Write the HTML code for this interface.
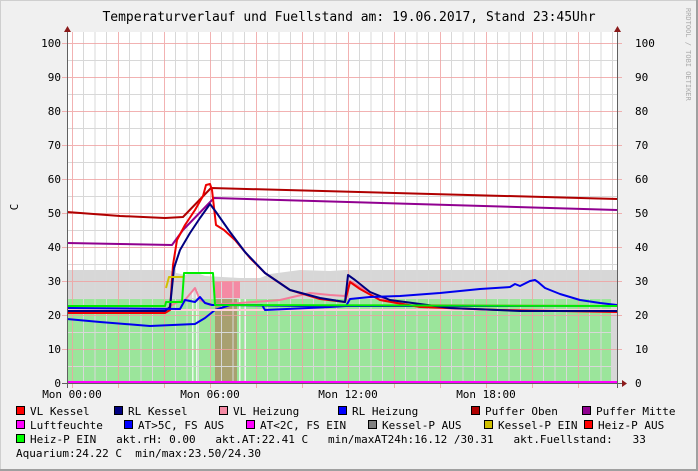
<!DOCTYPE html>
<html><head><meta charset="utf-8"><style>
html,body{margin:0;padding:0;background:#f0f0f0}
svg{display:block}
text{font-family:"DejaVu Sans Mono","Liberation Mono",monospace;font-size:11px;fill:#000}
</style></head><body>
<svg width="698" height="471" viewBox="0 0 698 471" xmlns="http://www.w3.org/2000/svg">
<rect x="0" y="0" width="698" height="471" fill="#f0f0f0"/>
<rect x="0.5" y="0.5" width="697" height="470" fill="none" stroke="#cfcfcf"/>
<rect x="696" y="0" width="2" height="471" fill="#a0a0a0"/>
<rect x="0" y="469" width="698" height="2" fill="#a0a0a0"/>
<text x="349" y="21" text-anchor="middle" style="font-size:13px">Temperaturverlauf und Fuellstand am: 19.06.2017, Stand 23:45Uhr</text>
<text transform="translate(686,8) rotate(90)" style="font-size:7px;fill:#aaa">RRDTOOL / TOBI OETIKER</text>
<rect x="67" y="32" width="550" height="351" fill="#fff"/>
<!-- areas -->
<path d="M67,270 L170,270 L172,272 L185,275 L195,272 L205,276 L240,278 L260,278 L270,274 L300,270 L330,271 L345,270 L617,270 L617,383 L67,383Z" fill="#d7d7d7"/>
<path d="M67,299 L611,299 L611,383 L67,383Z" fill="#9be59b"/>
<path d="M215,281 L240,281 L240,299 L215,299Z" fill="#f48aa4"/>
<path d="M215,299 L237,299 L237,383 L215,383Z" fill="#a8a070"/>
<g fill="#fff" opacity=".8"><rect x="192" y="290" width="1.5" height="93"/><rect x="196" y="290" width="1.5" height="93"/><rect x="239" y="299" width="1.5" height="84"/><rect x="245" y="299" width="1" height="84"/></g>
<!-- grid -->
<g stroke="#d8d8d8" stroke-width="1">
<path d="M67,366.5H617M67,332.5H617M67,298.5H617M67,264.5H617M67,230.5H617M67,196.5H617M67,162.5H617M67,128.5H617M67,94.5H617M67,60.5H617"/>
<path d="M83.5,32V383M95,32V383M106.5,32V383M129.5,32V383M141,32V383M152.5,32V383M175.5,32V383M187,32V383M198.5,32V383M221.5,32V383M233,32V383M244.5,32V383M267.5,32V383M279,32V383M290.5,32V383M313.5,32V383M325,32V383M336.5,32V383M359.5,32V383M371,32V383M382.5,32V383M405.5,32V383M417,32V383M428.5,32V383M451.5,32V383M463,32V383M474.5,32V383M497.5,32V383M509,32V383M520.5,32V383M543.5,32V383M555,32V383M566.5,32V383M589.5,32V383M601,32V383M612.5,32V383"/>
</g>
<g stroke="#f0a0a0" stroke-width="1" opacity=".8">
<path d="M62,383.5H622M62,349.5H622M62,315.5H622M62,281.5H622M62,247.5H622M62,213.5H622M62,179.5H622M62,145.5H622M62,111.5H622M62,77.5H622M62,43.5H622"/>
<path d="M72.5,32V388M118.5,32V388M164.5,32V388M210.5,32V388M256.5,32V388M302.5,32V388M348.5,32V388M394.5,32V388M440.5,32V388M486.5,32V388M532.5,32V388M578.5,32V388"/>
</g>
<!-- lines -->
<g fill="none" stroke-width="2" stroke-linejoin="round">
<polyline stroke="#0000ee" points="67,319 100,322 150,326 195,324 205,318 215,310 230,305 300,306 617,306"/>
<polyline stroke="#ffd0d8" points="67,310 617,310"/>
<polyline stroke="#f47c9a" points="67,311 166,311 170,306 178,302 185,300 195,288 200,300 210,305 240,303 280,300 310,293 330,295 345,296 350,281 360,287 380,297 400,305 617,306"/>
<polyline stroke="#b00000" points="67,212 120,216 165,218 183,217 211,188 617,199"/>
<polyline stroke="#900090" points="67,243 120,244 172,245 183,230 214,198 617,210"/>
<polyline stroke="#ee0000" points="67,313 165,313 170,310 173,265 177,240 185,225 195,210 203,196 206,185 210,184 212,190 216,225 224,230 235,240 250,258 265,273 290,290 320,299 345,302 350,282 360,289 380,300 420,307 500,310 617,312"/>
<polyline stroke="#000080" points="67,311 165,311 170,307 174,268 180,250 190,233 200,218 210,204 216,212 230,232 245,252 265,273 290,290 320,298 345,302 348,275 355,280 370,292 390,300 450,308 520,311 617,311"/>
<polyline stroke="#0000ee" points="67,308 180,309 185,300 195,302 200,297 205,303 212,305 262,305 265,310 330,307 346,306 350,299 370,297 400,296 440,293 480,289 510,287 515,284 520,286 530,281 535,280 538,282 545,288 560,294 580,300 600,303 617,305"/>
<polyline stroke="#d0c000" points="166,288 169,277 184,277"/>
<polyline stroke="#00ee00" points="67,306 165,306 166,302 182,302 184,273 213,273 215,305 617,306"/>
</g>
<rect x="67" y="381" width="551" height="2" fill="#ff00ff"/>
<!-- axes -->
<path d="M67.5,28V388M62,383.5H622" stroke="#606060" stroke-width="1"/>
<path d="M617.5,28V388" stroke="#606060" stroke-width="1"/>
<path d="M64,32L67.5,26L71,32Z M614,32L617.5,26L621,32Z M622,380L627,383.5L622,387Z" fill="#8b1a1a"/>
<!-- y labels -->
<g text-anchor="end">
<text x="61" y="47">100</text><text x="61" y="81">90</text><text x="61" y="115">80</text><text x="61" y="149">70</text><text x="61" y="183">60</text><text x="61" y="217">50</text><text x="61" y="251">40</text><text x="61" y="285">30</text><text x="61" y="319">20</text><text x="61" y="353">10</text><text x="61" y="387">0</text>
</g>
<g>
<text x="635" y="47">100</text><text x="635" y="81">90</text><text x="635" y="115">80</text><text x="635" y="149">70</text><text x="635" y="183">60</text><text x="635" y="217">50</text><text x="635" y="251">40</text><text x="635" y="285">30</text><text x="635" y="319">20</text><text x="635" y="353">10</text><text x="635" y="387">0</text>
</g>
<text transform="translate(18,207) rotate(-90)" text-anchor="middle">C</text>
<g text-anchor="middle"><text x="72" y="398">Mon 00:00</text><text x="210" y="398">Mon 06:00</text><text x="348" y="398">Mon 12:00</text><text x="486" y="398">Mon 18:00</text></g>
<!-- legend -->
<g stroke="#000" stroke-width="1">
<rect x="16.5" y="406.5" width="8" height="8" fill="#ff0000"/>
<rect x="114.5" y="406.5" width="8" height="8" fill="#000080"/>
<rect x="219.5" y="406.5" width="8" height="8" fill="#f48aa4"/>
<rect x="338.5" y="406.5" width="8" height="8" fill="#0000ff"/>
<rect x="471.5" y="406.5" width="8" height="8" fill="#b00000"/>
<rect x="582.5" y="406.5" width="8" height="8" fill="#900090"/>
<rect x="16.5" y="420.5" width="8" height="8" fill="#ff00ff"/>
<rect x="124.5" y="420.5" width="8" height="8" fill="#0000ff"/>
<rect x="246.5" y="420.5" width="8" height="8" fill="#ff00ff"/>
<rect x="368.5" y="420.5" width="8" height="8" fill="#808080"/>
<rect x="484.5" y="420.5" width="8" height="8" fill="#d0c000"/>
<rect x="584.5" y="420.5" width="8" height="8" fill="#ff0000"/>
<rect x="16.5" y="434.5" width="8" height="8" fill="#00ff00"/>
</g>
<text x="30" y="415" xml:space="preserve">VL Kessel</text>
<text x="128" y="415">RL Kessel</text>
<text x="233" y="415">VL Heizung</text>
<text x="352" y="415">RL Heizung</text>
<text x="485" y="415">Puffer Oben</text>
<text x="596" y="415">Puffer Mitte</text>
<text x="30" y="429">Luftfeuchte</text>
<text x="138" y="429">AT&gt;5C, FS AUS</text>
<text x="260" y="429">AT&lt;2C, FS EIN</text>
<text x="382" y="429">Kessel-P AUS</text>
<text x="498" y="429">Kessel-P EIN</text>
<text x="598" y="429">Heiz-P AUS</text>
<text x="30" y="443" xml:space="preserve">Heiz-P EIN   akt.rH: 0.00   akt.AT:22.41 C   min/maxAT24h:16.12 /30.31   akt.Fuellstand:   33</text>
<text x="16" y="457" xml:space="preserve">Aquarium:24.22 C  min/max:23.50/24.30</text>
</svg>
</body></html>
